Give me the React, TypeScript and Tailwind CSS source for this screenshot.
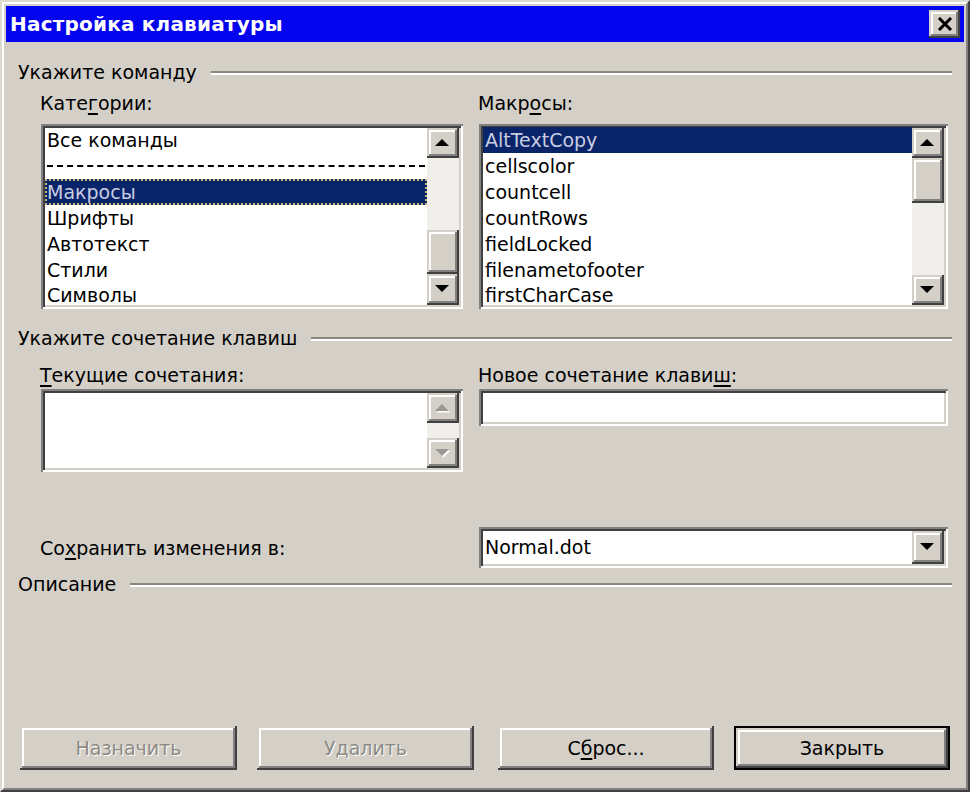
import React from 'react';

// классическая объёмная рамка Windows 2000 (увеличенная в 2 раза)
const RAISED =
  'shadow-[inset_-2px_-2px_0_#404040,inset_2px_2px_0_#d4d0c8,inset_-4px_-4px_0_#808080,inset_4px_4px_0_#ffffff]';
const SUNKEN =
  'shadow-[inset_2px_2px_0_#808080,inset_-2px_-2px_0_#ffffff,inset_4px_4px_0_#404040,inset_-4px_-4px_0_#d4d0c8]';

function Arrow({ dir, disabled = false }: { dir: 'up' | 'down'; disabled?: boolean }) {
  const pts = dir === 'up' ? '7,0 14,7 0,7' : '0,0 14,0 7,7';
  return (
    <svg width="16" height="9" viewBox="0 0 16 9">
      {disabled && <polygon points={pts} fill="#ffffff" transform="translate(1.5 1.5)" />}
      <polygon points={pts} fill={disabled ? '#9a9893' : '#000000'} />
    </svg>
  );
}

function ScrollBtn({ dir, h, disabled }: { dir: 'up' | 'down'; h: string; disabled?: boolean }) {
  return (
    <div className={`${h} shrink-0 bg-[#d4d0c8] ${RAISED} flex items-center justify-center`}>
      <Arrow dir={dir} disabled={disabled} />
    </div>
  );
}

function SectionHeader({ title }: { title: string }) {
  return (
    <div className="flex items-center h-[24px] pl-[12px] pr-[12px]">
      <span className="leading-[24px]">{title}</span>
      <div className="flex-1 ml-[14px] mt-[1px] border-t-2 border-b-2 border-t-[#8a877f] border-b-white" />
    </div>
  );
}

const categories = ['Шрифты', 'Автотекст', 'Стили'];
const macros = ['cellscolor', 'countcell', 'countRows', 'fieldLocked', 'filenametofooter'];

// строка списка: 26px высотой, текст по центру
const ROW = 'h-[26px] shrink-0 flex items-center leading-[20px] pl-[2px]';
// последняя видимая строка обрезана краем списка
const ROW_LAST = 'h-[22px] shrink-0 leading-[20px] pl-[2px] pt-[2px]';
const SELECTED = 'bg-[#0a246a] text-[#c9cde0]';

function DialogButton({
  label,
  disabled,
  isDefault,
  width,
}: {
  label: React.ReactNode;
  disabled?: boolean;
  isDefault?: boolean;
  width: string;
}) {
  return (
    <div
      className={`${width} h-[44px] shrink-0 ${isDefault ? 'border-2 border-black' : ''} bg-[#d4d0c8]`}
    >
      <div
        className={`w-full h-full ${RAISED} flex items-center justify-center ${
          disabled ? 'text-[#8d8a84] [text-shadow:1px_1px_0_#ffffff]' : 'text-black'
        }`}
      >
        {label}
      </div>
    </div>
  );
}

export default function App() {
  return (
    <div className="w-[970px] h-[792px] bg-[#d4d0c8] font-['DejaVu_Sans',sans-serif] text-[19px] text-black border-2 border-t-[#dcd9d2] border-l-[#dcd9d2] border-r-[#404040] border-b-[#404040]">
      <div className="w-full h-full border-2 border-t-white border-l-white border-r-[#808080] border-b-[#808080] p-[2px] flex flex-col">
        {/* заголовок окна */}
        <div className="h-[36px] shrink-0 bg-[#0404ee] flex items-center justify-between pl-[4px] pr-[4px]">
          <span className="text-white font-bold text-[20px] tracking-[0.2px]">Настройка клавиатуры</span>
          <div className={`w-[31px] h-[28px] bg-[#d4d0c8] ${RAISED} flex items-center justify-center`}>
            <svg width="16" height="14" viewBox="0 0 16 14">
              <path d="M2 1 L14 13 M14 1 L2 13" stroke="#000" strokeWidth="3" />
            </svg>
          </div>
        </div>

        <div className="flex-1 flex flex-col">
          <div className="mt-[18px]">
            <SectionHeader title="Укажите команду" />
          </div>

          <div className="grid grid-cols-[422px_469px] gap-x-[16px] pl-[35px] mt-[7px]">
            <span className="leading-[24px] -ml-px">
              Кате<span className="underline decoration-2 underline-offset-[3px]">г</span>ории:
            </span>
            <span className="leading-[24px] -ml-px">
              Макр<span className="underline decoration-2 underline-offset-[3px]">о</span>сы:
            </span>

            {/* категории */}
            <div className={`mt-[9px] h-[185px] bg-white p-[4px] ${SUNKEN} flex`}>
              <div className="flex-1 overflow-hidden flex flex-col -mt-px">
                <div className={ROW}>Все команды</div>
                <div className="h-[26px] shrink-0 flex items-center pl-[2px] pr-[2px]">
                  <div className="w-full border-t-2 border-dashed border-black" />
                </div>
                <div
                  className={`${ROW} ${SELECTED} outline-2 outline-dotted outline-[#c9b870] -outline-offset-2`}
                >
                  Макросы
                </div>
                {categories.map((c) => (
                  <div key={c} className={ROW}>
                    {c}
                  </div>
                ))}
                <div className={ROW_LAST}>Символы</div>
              </div>
              <div className="w-[32px] flex flex-col">
                <ScrollBtn dir="up" h="h-[30px]" />
                <div className="h-[72px] bg-[#f1efeb]" />
                <div className={`h-[44px] bg-[#d4d0c8] ${RAISED}`} />
                <div className="flex-1 flex flex-col">
                  <ScrollBtn dir="down" h="h-full" />
                </div>
              </div>
            </div>

            {/* макросы */}
            <div className={`mt-[9px] h-[185px] bg-white p-[4px] ${SUNKEN} flex`}>
              <div className="flex-1 overflow-hidden flex flex-col -mt-px">
                <div className={`${ROW} ${SELECTED}`}>AltTextCopy</div>
                {macros.map((m) => (
                  <div key={m} className={ROW}>
                    {m}
                  </div>
                ))}
                <div className={ROW_LAST}>firstCharCase</div>
              </div>
              <div className="w-[32px] flex flex-col">
                <ScrollBtn dir="up" h="h-[30px]" />
                <div className={`h-[45px] bg-[#d4d0c8] ${RAISED}`} />
                <div className="h-[72px] bg-[#f1efeb]" />
                <div className="flex-1 flex flex-col">
                  <ScrollBtn dir="down" h="h-full" />
                </div>
              </div>
            </div>
          </div>

          <div className="mt-[17px]">
            <SectionHeader title="Укажите сочетание клавиш" />
          </div>

          <div className="grid grid-cols-[422px_469px] gap-x-[16px] pl-[35px] mt-[13px] items-start">
            <span className="leading-[24px] -ml-px">
              <span className="underline decoration-2 underline-offset-[3px]">Т</span>екущие сочетания:
            </span>
            <span className="leading-[24px] -ml-px">
              Новое сочетание клави<span className="underline decoration-2 underline-offset-[3px]">ш</span>:
            </span>

            <div className={`mt-[2px] h-[83px] bg-white p-[4px] ${SUNKEN} flex`}>
              <div className="flex-1" />
              <div className="w-[32px] flex flex-col">
                <ScrollBtn dir="up" h="h-[30px]" disabled />
                <div className="flex-1 bg-[#f1efeb]" />
                <ScrollBtn dir="down" h="h-[30px]" disabled />
              </div>
            </div>
            <div className={`mt-[2px] h-[37px] bg-white ${SUNKEN}`} />
          </div>

          <div className="grid grid-cols-[422px_469px] gap-x-[16px] pl-[35px] mt-[55px] items-center">
            <span className="leading-[24px] -ml-px">
              Со<span className="underline decoration-2 underline-offset-[3px]">х</span>ранить изменения в:
            </span>
            <div className={`h-[41px] bg-white p-[4px] ${SUNKEN} flex`}>
              <div className="flex-1 pl-[2px] flex items-center">Normal.dot</div>
              <ScrollBtn dir="down" h="w-[32px] h-full" />
            </div>
          </div>

          <div className="mt-[4px]">
            <SectionHeader title="Описание" />
          </div>

          <div className="mt-auto mb-[16px] flex pl-[14px]">
            <DialogButton width="w-[217px]" label="Назначить" disabled />
            <div className="ml-[20px]">
              <DialogButton width="w-[217px]" label="Удалить" disabled />
            </div>
            <div className="ml-[24px]">
              <DialogButton
                width="w-[216px]"
                label={
                  <span>
                    С<span className="underline decoration-2 underline-offset-[3px]">б</span>рос...
                  </span>
                }
              />
            </div>
            <div className="ml-[20px]">
              <DialogButton width="w-[216px]" label="Закрыть" isDefault />
            </div>
          </div>
        </div>
      </div>
    </div>
  );
}
